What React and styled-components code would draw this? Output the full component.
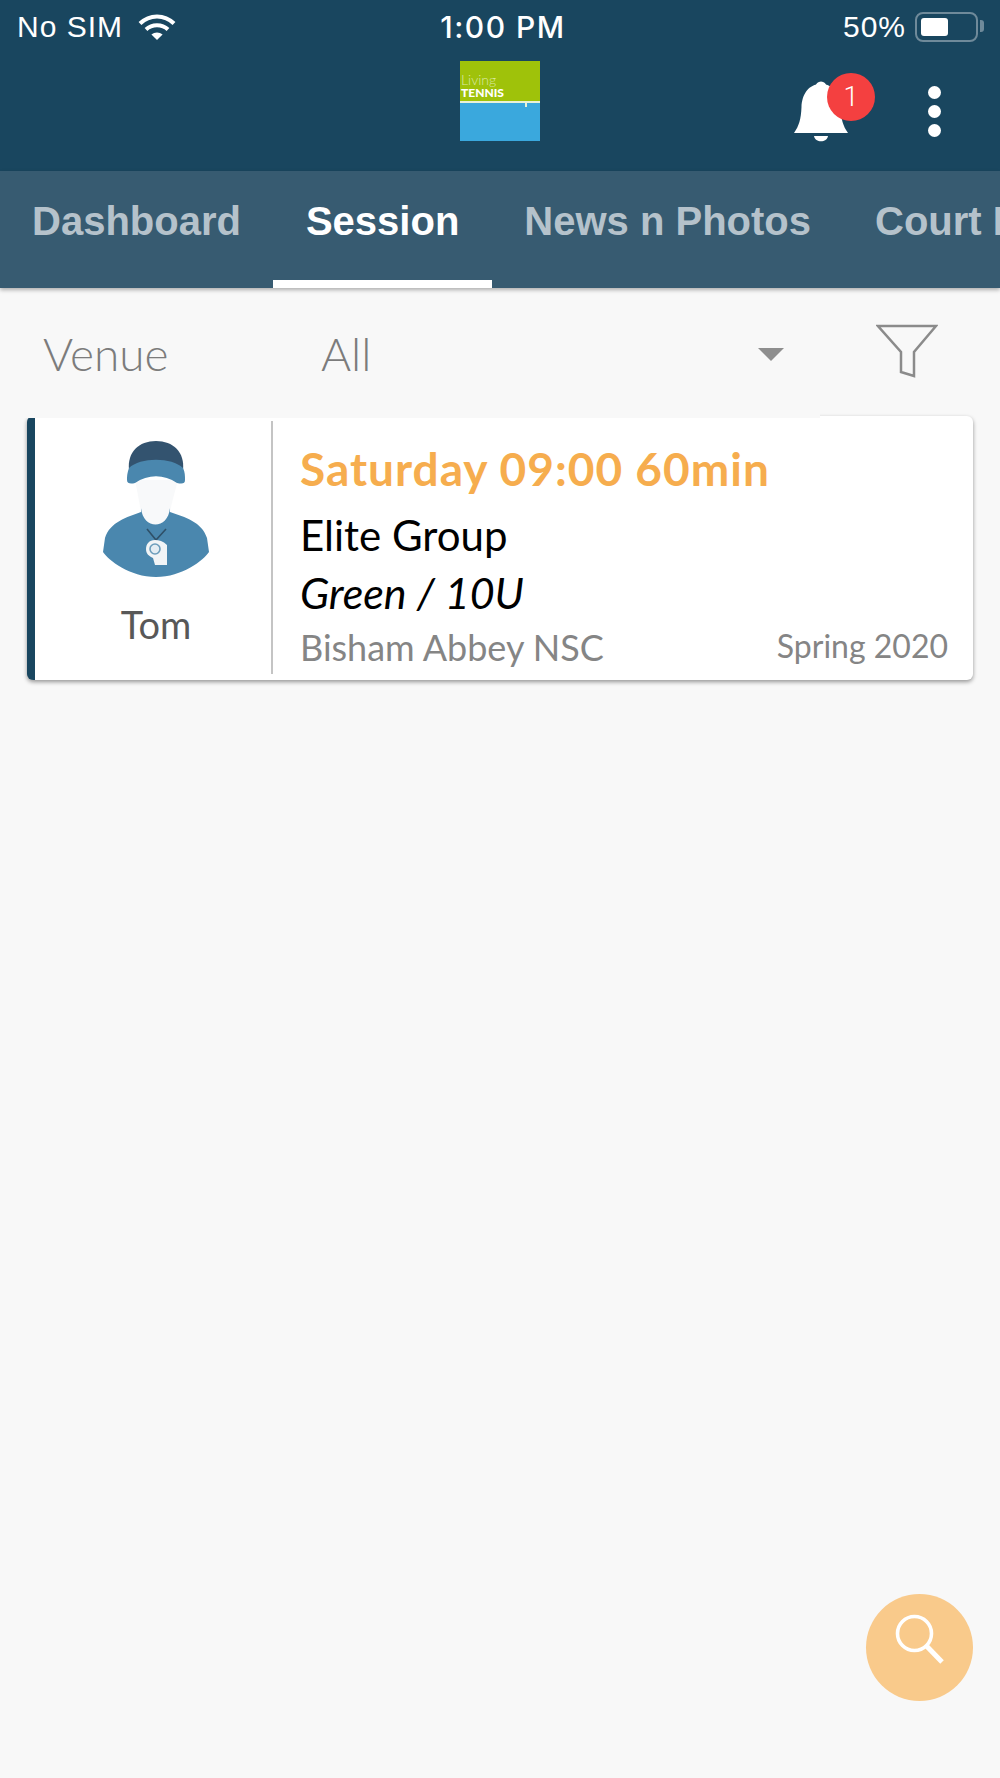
import React from "react";
import styled, { createGlobalStyle } from "styled-components";

const GlobalStyle = createGlobalStyle`
  html, body {
    margin: 0;
    padding: 0;
    background: #f8f8f8;
  }
  * {
    box-sizing: border-box;
  }
`;

const Page = styled.div`
  position: relative;
  width: 1000px;
  height: 1778px;
  overflow: hidden;
  background: #f8f8f8;
  font-family: "Lato", "Liberation Sans", sans-serif;
`;

const TopBar = styled.div`
  height: 171px;
  background: #19465f;
  color: #fff;
`;

const StatusBar = styled.div`
  display: grid;
  grid-template-columns: 1fr auto 1fr;
  align-items: center;
  height: 54px;
  padding: 0 22px 0 17px;
  font-family: "Liberation Sans", Arial, sans-serif;
  font-size: 30px;
  letter-spacing: 1px;
`;

const StatusLeft = styled.div`
  display: flex;
  align-items: center;
  gap: 15px;
`;

const StatusTime = styled.div`
  margin-left: 11px;
  font-family: "Inter", "Liberation Sans", sans-serif;
  font-weight: 500;
  font-size: 30px;
  letter-spacing: 1.5px;
`;

const StatusRight = styled.div`
  display: flex;
  align-items: center;
  justify-content: flex-end;
  gap: 9px;
`;

const Battery = styled.div`
  position: relative;
  width: 63px;
  height: 30px;
  padding: 4px;
  border: 2px solid #6f8a9a;
  border-radius: 8px;

  &::before {
    content: "";
    display: block;
    width: 27px;
    height: 100%;
    background: #fff;
    border-radius: 3px;
  }

  &::after {
    content: "";
    position: absolute;
    top: 6px;
    right: -8px;
    width: 4px;
    height: 12px;
    background: #6f8a9a;
    border-radius: 0 3px 3px 0;
  }
`;

const HeaderRow = styled.div`
  position: relative;
  display: flex;
  justify-content: center;
  height: 117px;
  padding-top: 7px;
`;

const Logo = styled.div`
  display: flex;
  flex-direction: column;
  width: 80px;
  height: 80px;
  background: #3aa8dd;
`;

const LogoTop = styled.div`
  position: relative;
  height: 42px;
  padding: 11px 0 0 1px;
  background: #9fc20a;
  border-bottom: 2px solid #e8f2d8;

  &::after {
    content: "";
    position: absolute;
    left: 65px;
    bottom: -6px;
    width: 2px;
    height: 4px;
    background: #e8f2d8;
  }
`;

const LogoLiving = styled.div`
  font-size: 14px;
  line-height: 15px;
  font-weight: 300;
  color: #dbe9a6;
`;

const LogoTennis = styled.div`
  font-size: 12px;
  line-height: 12px;
  font-weight: 900;
  color: #fff;
`;

const HeaderActions = styled.div`
  position: absolute;
  top: 0;
  right: 0;
  display: flex;
  align-items: flex-start;
`;

const BellWrap = styled.div`
  position: relative;
  width: 54px;
  height: 62px;
  margin: 26px 0 0 0;
`;

const Badge = styled.div`
  position: absolute;
  top: -7px;
  left: 33px;
  display: flex;
  align-items: center;
  justify-content: center;
  width: 48px;
  height: 48px;
  border-radius: 50%;
  background: #f44040;
  color: #fff;
  font-family: "Roboto", "Liberation Sans", sans-serif;
  font-weight: 300;
  font-size: 27px;
`;

const MoreDots = styled.div`
  display: flex;
  flex-direction: column;
  gap: 6px;
  margin: 32px 59px 0 80px;
`;

const Dot = styled.span`
  display: block;
  width: 13px;
  height: 13px;
  border-radius: 50%;
  background: #fff;
`;

const Tabs = styled.div`
  display: flex;
  height: 117px;
  overflow: hidden;
  background: #375b71;
  box-shadow: 0 2px 4px rgba(0, 0, 0, 0.3);
  position: relative;
  font-family: "Liberation Sans", Arial, sans-serif;
  font-size: 40px;
  font-weight: 700;
`;

const Tab = styled.div`
  flex: none;
  height: 100%;
  padding: 28px ${(p) => (p.$active ? 33 : 32)}px 0;
  white-space: nowrap;
  color: ${(p) => (p.$active ? "#ffffff" : "#b5c2cb")};
  border-bottom: 8px solid ${(p) => (p.$active ? "#ffffff" : "transparent")};
`;

const FilterRow = styled.div`
  display: flex;
  align-items: center;
  height: 128px;
  padding: 0 62px 2px 43px;
  color: #7c7c7c;
  font-size: 46px;
  font-weight: 300;
`;

const FilterLabel = styled.div`
  width: 278px;
  margin-top: 4px;
`;

const FilterValue = styled.div`
  flex: 1;
  margin-top: 4px;
`;

const Caret = styled.div`
  width: 0;
  height: 0;
  margin: 6px 92px 0 0;
  border-left: 13px solid transparent;
  border-right: 13px solid transparent;
  border-top: 13px solid #8e8e8e;
`;

const Card = styled.div`
  position: relative;
  display: flex;
  height: 264px;
  margin: 0 27px;
  background: #fff;
  border-radius: 6px;
  border-left: 8px solid #19465f;
  box-shadow: 0 2px 4px rgba(0, 0, 0, 0.4);

  &::before {
    content: "";
    position: absolute;
    top: -4px;
    left: -12px;
    width: 797px;
    height: 6px;
    background: #f8f8f8;
  }
`;

const Coach = styled.div`
  display: flex;
  flex-direction: column;
  align-items: center;
  flex: none;
  width: 238px;
  height: 253px;
  margin-top: 5px;
  padding: 19px 0 0 6px;
  border-right: 2px solid #c4c4c4;
`;

const CoachName = styled.div`
  margin-top: 24px;
  font-size: 38px;
  line-height: 44px;
  color: #585858;
`;

const Details = styled.div`
  flex: 1;
  padding: 27px 25px 0 27px;
`;

const SessionTime = styled.div`
  font-size: 46px;
  line-height: 52px;
  font-weight: 700;
  letter-spacing: 1px;
  color: #f6ad4e;
`;

const GroupName = styled.div`
  margin-top: 14px;
  font-size: 42px;
  line-height: 52px;
  color: #000;
`;

const GroupLevel = styled.div`
  margin-top: 7px;
  font-size: 43px;
  line-height: 50px;
  font-style: italic;
  color: #000;
`;

const MetaRow = styled.div`
  display: flex;
  justify-content: space-between;
  align-items: center;
  margin-top: 7px;
  color: #858585;
  line-height: 44px;
`;

const Venue = styled.div`
  font-size: 36px;
`;

const Term = styled.div`
  font-size: 32px;
  margin-top: -2px;
`;

const SearchFab = styled.div`
  position: absolute;
  left: 866px;
  top: 1594px;
  display: flex;
  align-items: center;
  justify-content: center;
  width: 107px;
  height: 107px;
  border-radius: 50%;
  background: #f9ca8b;
`;

const WifiIcon = () => (
  <svg width="38" height="28" viewBox="0 0 38 28" fill="none" stroke="#fff" strokeWidth="4">
    <path d="M2 10.5C11.5 1 26.5 1 36 10.5" />
    <path d="M8 16.5C14 10.8 24 10.8 30 16.5" />
    <path d="M19 27L13.4 21.6C16.6 18.8 21.4 18.8 24.6 21.6Z" fill="#fff" stroke="none" />
  </svg>
);

const BellIcon = () => (
  <svg width="54" height="62" viewBox="0 0 54 62" fill="#fff">
    <circle cx="27" cy="7" r="5.5" />
    <path d="M27 4C14 4 8 15 7.5 27C7 39 5 46 0 53H54C49 46 47 39 46.5 27C46 15 40 4 27 4Z" />
    <path d="M20 56H34C33 63 21 63 20 56Z" />
  </svg>
);

const FunnelIcon = () => (
  <svg width="62" height="54" viewBox="0 0 62 54" fill="none" stroke="#8b8b8b" strokeWidth="2.5">
    <path d="M2 2H60L38 28V52L25 48V28Z" strokeLinejoin="miter" />
  </svg>
);

const CoachAvatar = () => (
  <svg width="108" height="138" viewBox="0 0 108 138">
    <path d="M33 40C36 55 38 66 39 72C41 90 66 90 68 72C69 66 72 55 76 40Z" fill="#f8f9fa" />
    <path d="M27 30C25 12 37 1 54 1C71 1 83 12 81 30Z" fill="#33536f" />
    <path d="M25 40C25 34 26 31 27 28C38 17 70 17 81 28C83 32 83 36 83 40C83 44 80 44 75 43C62 34 46 34 33 43C29 44 25 44 25 40Z" fill="#4a87ae" />
    <path d="M39 68V72C25 77 8 82 3 98L1 112C6 120 28 137 54 137C80 137 102 120 107 112L105 98C100 82 83 77 68 72V68C66 90 41 90 39 68Z" fill="#4a87ae" />
    <path d="M45 89L54 100L64 89" fill="none" stroke="#2f5068" strokeWidth="1.6" />
    <path d="M53 100C47 100 44 104 44 109C44 114 47 116 51 118L53 125H65V105C61 101 57 100 53 100Z" fill="#f1f4f6" />
    <circle cx="53" cy="109" r="5" fill="#e4edf3" stroke="#6c9dbb" strokeWidth="1.6" />
  </svg>
);

const SearchIcon = () => (
  <svg width="76" height="76" viewBox="0 0 76 76" fill="none" stroke="#fff" strokeWidth="3.6">
    <circle cx="32.5" cy="23.5" r="17" />
    <path d="M44.5 36L60 52" strokeWidth="5" />
  </svg>
);

const App = () => {
  return (
    <Page>
      <GlobalStyle />
      <TopBar>
        <StatusBar>
          <StatusLeft>
            No SIM
            <WifiIcon />
          </StatusLeft>
          <StatusTime>1:00 PM</StatusTime>
          <StatusRight>
            50%
            <Battery />
          </StatusRight>
        </StatusBar>
        <HeaderRow>
          <Logo>
            <LogoTop>
              <LogoLiving>Living</LogoLiving>
              <LogoTennis>TENNIS</LogoTennis>
            </LogoTop>
          </Logo>
          <HeaderActions>
            <BellWrap>
              <BellIcon />
              <Badge>1</Badge>
            </BellWrap>
            <MoreDots>
              <Dot />
              <Dot />
              <Dot />
            </MoreDots>
          </HeaderActions>
        </HeaderRow>
      </TopBar>

      <Tabs>
        <Tab>Dashboard</Tab>
        <Tab $active>Session</Tab>
        <Tab>News n Photos</Tab>
        <Tab>Court Booking</Tab>
      </Tabs>

      <FilterRow>
        <FilterLabel>Venue</FilterLabel>
        <FilterValue>All</FilterValue>
        <Caret />
        <FunnelIcon />
      </FilterRow>

      <Card>
        <Coach>
          <CoachAvatar />
          <CoachName>Tom</CoachName>
        </Coach>
        <Details>
          <SessionTime>Saturday 09:00 60min</SessionTime>
          <GroupName>Elite Group</GroupName>
          <GroupLevel>Green / 10U</GroupLevel>
          <MetaRow>
            <Venue>Bisham Abbey NSC</Venue>
            <Term>Spring 2020</Term>
          </MetaRow>
        </Details>
      </Card>

      <SearchFab>
        <SearchIcon />
      </SearchFab>
    </Page>
  );
};

export default App;
